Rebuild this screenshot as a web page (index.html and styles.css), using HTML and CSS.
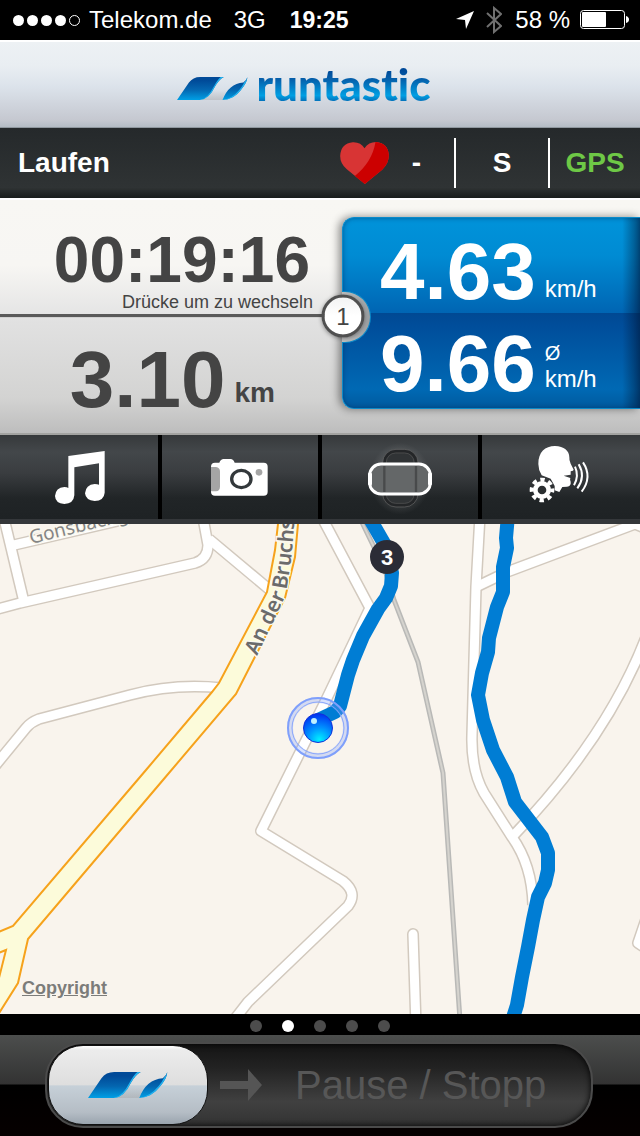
FILE: index.html
```html
<!DOCTYPE html>
<html lang="de">
<head>
<meta charset="utf-8">
<meta name="viewport" content="width=device-width, initial-scale=1">
<title>runtastic</title>
<link rel="stylesheet" href="styles.css">
</head>
<body>
<svg class="defs" aria-hidden="true">
  <defs>
    <linearGradient id="markFill" x1="0" y1="0" x2="0" y2="1">
      <stop offset="0.15" stop-color="#004a98"/>
      <stop offset="0.55" stop-color="#0466b0"/>
      <stop offset="1" stop-color="#00a0e6"/>
    </linearGradient>
    <linearGradient id="markShade" x1="0" y1="0" x2="0" y2="1">
      <stop offset="0.3" stop-color="#999" stop-opacity="0"/>
      <stop offset="1" stop-color="#999" stop-opacity="0.35"/>
    </linearGradient>
    <symbol id="mark" viewBox="46 80 214 74">
      <path d="M160 110Q145 145 115 152H183Q190 130 200 120Z" fill="url(#markShade)"/>
      <path d="M46 152L82 99Q94 82 116 82H187Q172 90 160 112Q143 149 115 152Z" fill="url(#markFill)"/>
      <path d="M187 82Q172 90 160 112Q143 149 115 152Q139 147 157 111Q168 90 178 82Z" fill="#22b4f0"/>
      <path d="M183 152Q202 102 246 99Q256 92 258 83Q258 98 238 122Q217 150 183 152Z" fill="url(#markFill)"/>
      <path d="M258 83Q258 98 238 122Q217 150 183 152Q213 147 235 120Q244 109 249 98Q256 91 258 83Z" fill="#22b4f0"/>
    </symbol>
  </defs>
</svg>

<div class="app">
  <div class="status">
    <span class="signal"><i></i><i></i><i></i><i></i><i class="empty"></i></span>
    <span class="carrier">Telekom.de</span>
    <span class="network">3G</span>
    <strong class="clock">19:25</strong>
    <svg class="nav" viewBox="0 0 18 18" aria-hidden="true"><path d="M0 8L18 0L10 18L9 9Z" fill="#fff"/></svg>
    <svg class="bluetooth" viewBox="0 0 16 28" aria-hidden="true"><path d="M1 7L15 20L8 26V2L15 8L1 21" fill="none" stroke="#707070" stroke-width="2"/></svg>
    <span class="percent">58 %</span>
    <svg class="battery" viewBox="0 0 49 20" aria-hidden="true">
      <rect x="0.5" y="0.5" width="44" height="18" rx="3" fill="none" stroke="#fff"/>
      <rect x="2" y="2" width="24" height="15" rx="1" fill="#fff"/>
      <path d="M46 6Q49 7 49 9.500Q49 12 46 13Z" fill="#fff"/>
    </svg>
  </div>

  <header class="brand">
    <svg class="brand-mark" aria-hidden="true"><use href="#mark"/></svg>
    <h1>runtastic</h1>
  </header>

  <div class="activity">
    <span class="sport">Laufen</span>
    <span class="pulse">
      <svg viewBox="0 0 146 126" aria-label="Puls">
        <path d="M74 126L20 82Q0 65 0 42Q2 4 38 1Q62 0 73 19Q85 0 108 0Q144 4 146 40Q146 65 126 83Z" fill="#d83434"/>
        <path d="M74 126L44 102Q96 60 106 0Q144 3 146 40Q146 65 126 83Z" fill="#cc0000"/>
      </svg>
      -
    </span>
    <span class="session">S</span>
    <span class="gps">GPS</span>
  </div>

  <main>
    <section class="stats">
      <div class="totals">
        <div class="duration">
          <span class="time">00:19:16</span>
          <span class="hint">Drücke um zu wechseln</span>
        </div>
        <div class="distance">
          <span class="value">3.10</span><span class="unit">km</span>
        </div>
      </div>
      <div class="speeds">
        <div class="speed now"><span class="value">4.63</span><span class="unit">km/h</span></div>
        <div class="speed avg"><span class="value">9.66</span><span class="unit"><small>Ø</small>km/h</span></div>
        <button class="page-badge" type="button">1</button>
      </div>
    </section>

    <nav class="tools">
      <button type="button" aria-label="Musik">
        <svg viewBox="120 21 240 240">
          <path d="M205 78L314 63V188Q312 212 284 213Q257 211 255 190Q257 164 284 162Q292 162 297 164V100L223 112V196Q221 221 193 222Q166 220 165 198Q167 173 193 171Q201 171 205 174Z" fill="#fff"/>
        </svg>
      </button>
      <button type="button" aria-label="Kamera">
        <svg viewBox="600 21 240 240">
          <path d="M645 98H658Q662 87 671 87H692Q700 87 704 98H791Q803 98 803 110V185Q803 197 791 197H645Q633 197 633 185V110Q633 98 645 98Z" fill="#fff"/>
          <path d="M633 111H648Q660 113 660 125V170Q660 182 648 184H633Z" fill="#a5a5a5"/>
          <ellipse cx="724" cy="147" rx="29" ry="26" fill="#fff" stroke="#33383b" stroke-width="10"/>
          <circle cx="777" cy="127" r="10" fill="#a5a5a5"/>
        </svg>
      </button>
      <button type="button" aria-label="Querformat">
        <svg viewBox="120 21 240 240">
          <defs><radialGradient id="glow"><stop offset="0" stop-color="#fff" stop-opacity="0.35"/><stop offset="1" stop-color="#fff" stop-opacity="0"/></radialGradient></defs>
          <ellipse cx="240" cy="146" rx="92" ry="108" fill="url(#glow)"/>
          <rect x="193" y="63" width="96" height="163" rx="34" fill="#303335" stroke="#242628" stroke-width="9"/>
          <rect x="188" y="58" width="106" height="173" rx="40" fill="none" stroke="#666" stroke-width="2"/>
          <rect x="199" y="69" width="83" height="151" rx="28" fill="none" stroke="#555" stroke-width="2"/>
          <rect x="149" y="102" width="182" height="90" rx="34" fill="#646768" stroke="#fff" stroke-width="9"/>
          <path d="M150 130V164M330 130V164" stroke="#fff" stroke-width="12"/>
          <path d="M193 108V186M288 108V186" stroke="#484a4b" stroke-width="7"/>
        </svg>
      </button>
      <button type="button" aria-label="Sprachausgabe">
        <svg viewBox="600 21 240 240">
          <path d="M655 102C655 66 675 48 705 48C732 49 748 62 748 82Q747 91 752 101L761 119Q761 123 752 124V134L731 137L751 144Q749 149 752 155Q754 168 741 170L727 171L718 186L704 181V168L692 146L665 136Q655 120 655 102Z" fill="#fff"/>
          <circle cx="666" cy="180" r="27" fill="#2b2f31"/>
          <circle cx="666" cy="180" r="20" fill="none" stroke="#fff" stroke-width="14"/>
          <circle cx="666" cy="180" r="31" fill="none" stroke="#fff" stroke-width="12" stroke-dasharray="13 11.350" stroke-dashoffset="6"/>
          <path d="M765 110Q778 138 762 166M776 103Q798 140 772 175M789 97Q818 141 785 185" fill="none" stroke="#fff" stroke-width="6"/>
        </svg>
      </button>
    </nav>

    <section class="map">
      <svg class="map-canvas" viewBox="0 524 640 490" preserveAspectRatio="xMidYMid slice" role="img" aria-label="Karte">
        <defs>
          <g id="roads">
            <path d="M2 510L24 602"/>
            <path d="M-6 610L20 603L195 563Q208 559 208 545L203 518"/>
            <path d="M14 545L130 518"/>
            <path d="M209 539L270 590"/>
            <path d="M-6 767L26 728Q31 722 39 719L130 695Q175 683 222 688"/>
            <path d="M319 512L370 608L327 698L261 831L343 881Q358 893 348 906L248 1002L234 1020"/>
            <path d="M480 515L476 587L472 735Q471 770 484 793L512 837Q532 865 533 905"/>
            <path d="M478 586L507 572L635 524L650 530"/>
            <path d="M513 836Q610 735 648 632"/>
            <path d="M413 934L416 1026" stroke-linecap="round"/>
            <path d="M656 890L638 943L656 955"/>
          </g>
          <path id="labelBruch" d="M257 656L285 597Q292 566 295 510"/>
          <path id="labelGons" d="M31 544L130 520L190 506"/>
          <radialGradient id="ball" cx="0.55" cy="0.9" r="0.9">
            <stop offset="0" stop-color="#00f0ff"/><stop offset="0.45" stop-color="#0094ff"/><stop offset="1" stop-color="#0030f0"/>
          </radialGradient>
        </defs>
        <rect x="-400" y="124" width="1440" height="1290" fill="#f9f4ed"/>
        <path d="M357 512L385 570L394 600L418 662L443 773L460 1020" fill="none" stroke="#b9b9b7" stroke-width="5"/>
        <path d="M357 512L385 570L394 600L418 662L443 773L460 1020" fill="none" stroke="#d5d3ce" stroke-width="2"/>
        <use href="#roads" fill="none" stroke="#d2c9be" stroke-width="12" stroke-linejoin="round"/>
        <use href="#roads" fill="none" stroke="#fff" stroke-width="9" stroke-linejoin="round"/>
        <path d="M278 510L278 524L275 550L267 592L219 683L212 692L146 770L13 926L-4 933V954L6 950L-2 982L-4 1018L18 983L28 939L163 780L236 694L285 598L295 557L298 524L299 510Z" fill="#fcfbda" stroke="#f6a21c" stroke-width="2"/>
        <g class="street">
          <text class="minor"><textPath href="#labelGons">Gonsbachg</textPath></text>
          <text class="major"><textPath href="#labelBruch">An der Bruchs</textPath></text>
        </g>
        <g fill="none" stroke="#007dd4" stroke-width="14" stroke-linejoin="round">
          <path d="M366 512L385 545L392 573L391 586L386 598L378 609L363 636L353 660L348 675L340 706L335 712L318 720"/>
          <path d="M508 515L506 538L507 548L503 567L503 592L497 607L489 638L488 652L482 673L478 695L483 720L493 750L507 777L515 802L542 837L548 853L548 870L545 883L538 897L533 920L528 947L522 977L517 1005L511 1024"/>
        </g>
        <circle cx="387" cy="557" r="17" fill="#2b2c36"/>
        <text class="km-mark" x="387" y="565">3</text>
        <g fill="none">
          <circle cx="318" cy="728" r="28" stroke="#7f9ffb" stroke-opacity="0.3" stroke-width="6"/>
          <circle cx="318" cy="728" r="30" stroke="#7f9ffb" stroke-width="2"/>
          <circle cx="318" cy="728" r="26" stroke="#8aa7fb" stroke-width="1"/>
        </g>
        <circle cx="318" cy="728" r="14.500" fill="url(#ball)" stroke="#1330d8"/>
        <circle cx="314" cy="721" r="3" fill="#bff0ff"/>
      </svg>
      <a class="copyright" href="#copyright">Copyright</a>
    </section>
  </main>

  <div class="pager"><i></i><i class="current"></i><i></i><i></i><i></i></div>

  <footer class="control">
    <button class="slide" type="button">
      <span class="knob"><svg aria-hidden="true"><use href="#mark"/></svg></span>
      <svg class="arrow" viewBox="0 0 42 32" aria-hidden="true"><path d="M0 12H28V0L42 16L28 32V20H0Z" fill="#555"/></svg>
      <span class="slide-label">Pause / Stopp</span>
    </button>
  </footer>
</div>
</body>
</html>
```
FILE: styles.css
```css
* {
  box-sizing: border-box;
}

body {
  margin: 0;
  background: #000;
  font-family: "Liberation Sans", Arial, Helvetica, sans-serif;
}

button {
  margin: 0;
  padding: 0;
  border: 0;
  background: none;
  font: inherit;
  cursor: pointer;
}

.defs {
  position: absolute;
  width: 0;
  height: 0;
}

.app {
  display: flex;
  flex-direction: column;
  min-height: 100vh;
}

/* Status bar */
.status {
  display: flex;
  align-items: center;
  padding: 0 11px 0 13px;
  background: #000;
  color: #fff;
  font-size: 24px;
  line-height: 40px;
  white-space: nowrap;
}

.signal {
  display: flex;
  gap: 3px;
  margin-right: 9px;
}

.signal i {
  width: 11px;
  height: 11px;
  border-radius: 50%;
  background: #fff;
}

.signal .empty {
  border: 1px solid #fff;
  background: none;
}

.network {
  margin-left: 22px;
}

.clock {
  flex: 1;
  margin-left: 24px;
  font-size: 23px;
}

.nav {
  width: 18px;
  height: 18px;
}

.bluetooth {
  width: 16px;
  height: 28px;
  margin: 0 13px 0 12px;
}

.battery {
  width: 49px;
  height: 20px;
  margin-left: 10px;
}

/* Brand header */
.brand {
  display: flex;
  justify-content: center;
  align-items: baseline;
  gap: 8px;
  padding: 19px 32px 20px 0;
  border-top: 2px solid #fff;
  border-bottom: 1px solid #8f979e;
  background: linear-gradient(#edf1f4, #e9eef2 28%, #dce3eb 52%, #c5c8d0 92%, #b4bcc5);
}

.brand-mark {
  width: 71px;
  height: 25px;
}

.brand h1 {
  margin: 0;
  font-family: Lato, "Liberation Sans", sans-serif;
  font-size: 44px;
  font-weight: 900;
  font-variant-ligatures: none;
  line-height: 46px;
  color: transparent;
  background: linear-gradient(#004a98 20%, #0560ab 40%, #009fe3 75%, #0560ab 92%);
  -webkit-background-clip: text;
  background-clip: text;
}

/* Activity bar */
.activity {
  display: flex;
  align-items: center;
  padding: 10px 0 10px 18px;
  background: linear-gradient(#25292b, #2f3334 85%, #191d1c);
  color: #fff;
  font-size: 28px;
  font-weight: 700;
  line-height: 50px;
}

.sport {
  flex: 1;
}

.pulse {
  display: flex;
  align-items: center;
  gap: 23px;
  padding-right: 33px;
}

.pulse svg {
  width: 49px;
  height: 42px;
}

.session,
.gps {
  border-left: 2px solid #fff;
  text-align: center;
}

.session {
  width: 94px;
}

.gps {
  width: 92px;
  color: #6ec846;
}

/* Statistics */
.stats {
  display: grid;
  grid-template-columns: 342fr 298fr;
  border-top: 2px solid #fff;
  border-bottom: 2px solid #a3a3a1;
  background: linear-gradient(#f8f7f3, #f7f6f3 28%, #e5e5e5 49%, #e1e1e1 52%, #d3d3d2 85%, #bdbdbd);
}

.totals {
  color: #444;
}

.duration {
  display: flex;
  flex-direction: column;
  align-items: flex-end;
  padding: 28px 29px 2px 0;
  border-bottom: 3px solid #5a5a5a;
}

.time {
  padding-right: 3px;
  font-size: 64px;
  font-weight: 700;
  line-height: 64px;
}

.hint {
  font-size: 18px;
  line-height: 20px;
}

.distance {
  display: flex;
  justify-content: flex-end;
  align-items: flex-end;
  gap: 9px;
  padding: 22px 67px 13px 0;
  border-top: 1px solid #d2d2d2;
  font-weight: 700;
}

.value {
  font-size: 80px;
  font-weight: 700;
  line-height: 80px;
}

.distance .unit {
  margin-bottom: 13px;
  font-size: 28px;
  line-height: 28px;
}

.speeds {
  position: relative;
  margin: 17px 0 24px;
  border: 1px solid #0b8ac9;
  border-right: 0;
  border-radius: 12px 0 0 12px;
  background:
    linear-gradient(90deg, transparent 94%, rgba(0, 20, 50, 0.55)),
    linear-gradient(#0093da, #008bd3 20%, #0065b3 50%, #004993 50%, #004d9a 56%, #0069b4 90%, #005a9e);
  box-shadow: -3px 0 8px rgba(0, 0, 0, 0.45), inset 0 0 5px rgba(0, 40, 90, 0.5);
  color: #fff;
}

.speeds::before {
  content: "";
  position: absolute;
  top: 73px;
  left: -1px;
  width: 28px;
  height: 50px;
  border: 1px solid #0b8ac9;
  border-left: 0;
  border-radius: 0 26px 26px 0;
  background: linear-gradient(90deg, #c4c4c4, #9b9fa2);
}

.speed {
  display: flex;
  align-items: flex-end;
  gap: 9px;
  padding-left: 37px;
}

.now {
  padding-top: 14px;
}

.avg {
  padding-top: 12px;
  padding-bottom: 4px;
}

.speed .unit {
  display: flex;
  flex-direction: column;
  margin-bottom: 10px;
  font-size: 24px;
  line-height: 26px;
}

.avg .unit {
  margin-bottom: 12px;
}

.speed small {
  font-size: 20px;
}

.page-badge {
  position: absolute;
  top: 98px;
  left: 0;
  width: 43px;
  height: 43px;
  border: 3px solid #505050;
  border-radius: 50%;
  background: linear-gradient(#f3f3f3, #fff 50%);
  box-shadow: 0 1px 4px rgba(0, 0, 0, 0.4);
  color: #444;
  font-size: 24px;
  line-height: 36px;
  transform: translate(-50%, -50%);
}

/* Toolbar */
.tools {
  display: grid;
  grid-template-columns: repeat(4, 1fr);
  border-bottom: 5px solid #34373a;
  background: #000;
}

.tools button {
  display: flex;
  justify-content: center;
  padding: 2px 0;
  border-right: 2px solid #000;
  border-left: 2px solid #000;
  background: linear-gradient(#36393b, #43474a 20%, #3a3d40 45%, #212527 75%, #1e2224);
}

.tools button:first-child {
  border-left-color: transparent;
}

.tools button:last-child {
  border-right-color: transparent;
}

.tools svg {
  width: 80px;
  height: 80px;
}

/* Map */
main {
  display: flex;
  flex: 1;
  flex-direction: column;
}

.map {
  position: relative;
  display: flex;
  flex: 1;
  min-height: 320px;
  background: #f9f4ed;
}

.map-canvas {
  flex: 1;
  width: 100%;
  height: auto;
  min-width: 0;
}

.street {
  fill: #6b6b6b;
  stroke: #fbf8ee;
  stroke-width: 3px;
  paint-order: stroke;
  font-family: "Noto Sans", sans-serif;
}

.minor {
  fill: #858585;
  font-size: 19px;
}

.major {
  font-size: 21px;
  font-weight: 600;
}

.km-mark {
  fill: #fff;
  font-size: 22px;
  font-weight: 700;
  text-anchor: middle;
}

.copyright {
  position: absolute;
  bottom: 16px;
  left: 22px;
  color: #7c7c7a;
  font-size: 18px;
  font-weight: 700;
  line-height: 20px;
}

/* Pager */
.pager {
  display: flex;
  justify-content: center;
  gap: 20px;
  padding: 6px 0 3px;
  background: #000;
}

.pager i {
  width: 12px;
  height: 12px;
  border-radius: 50%;
  background: #4c4c4c;
}

.pager .current {
  background: #fff;
}

/* Slide control */
.control {
  padding: 7px 47px 8px 45px;
  background: linear-gradient(#4c4e4d, #333 48%, #000 50%, #060000);
}

.slide {
  display: flex;
  align-items: center;
  width: 100%;
  padding: 1px;
  border: 2px solid #4b4b4b;
  border-radius: 38px;
  background: linear-gradient(#141414, #232323 30%, #404040 70%, #333);
  box-shadow: inset 0 0 6px #000;
}

.knob {
  display: flex;
  justify-content: center;
  align-items: center;
  width: 160px;
  height: 80px;
  border: 1px solid #111;
  border-radius: 35px;
  background: linear-gradient(#fff, #ececec 5%, #dedede 50%, #c6d0d8 51%, #b5bdc5 85%, #9aa4ae);
}

.knob svg {
  width: 80px;
  height: 28px;
}

.arrow {
  width: 42px;
  height: 32px;
  margin-left: 12px;
}

.slide-label {
  flex: 1;
  padding-left: 33px;
  color: #575757;
  font-size: 40px;
  line-height: 44px;
  text-align: left;
  white-space: nowrap;
}
```
